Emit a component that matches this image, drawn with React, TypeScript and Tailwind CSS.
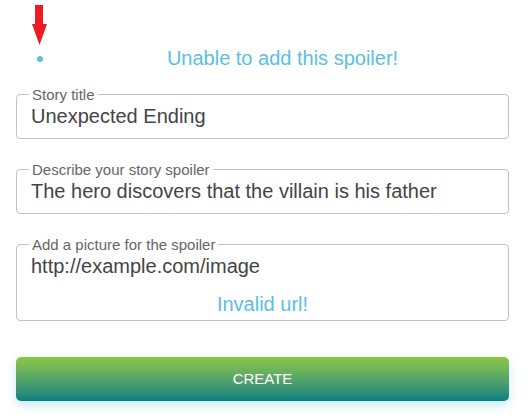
import React from "react";

function Field({
  label,
  value,
  error,
}: {
  label: string;
  value: string;
  error?: string;
}) {
  return (
    <fieldset className="w-[493px] rounded-[4px] border border-[#c2c2c2] pl-[12px] pr-[12px]">
      <legend className="px-[3px] text-[15px] leading-[17px] text-[#666666]">
        {label}
      </legend>
      <div className="h-[35px] pl-[2px] pt-[1px] text-[20px] leading-[24px] text-[#444444]">
        {value}
      </div>
      {error ? (
        <div className="mt-[4px] mb-[4px] text-center text-[20px] leading-[24px] text-[#5bc0de]">
          {error}
        </div>
      ) : null}
    </fieldset>
  );
}

export default function App() {
  return (
    <div
      className="relative h-[416px] w-[528px] overflow-hidden bg-white pl-[16px] pt-[47px]"
      style={{ fontFamily: '"Liberation Sans", Arial, sans-serif' }}
    >
      <svg
        className="absolute left-[32px] top-[5px]"
        width="15"
        height="40"
        viewBox="0 0 15 40"
      >
        <path d="M3 0 H11 V19 H15 L7.5 40 L0 19 H3 Z" fill="#ed1c24" />
      </svg>

      <ul className="w-[493px] list-disc pl-[40px] text-[20px] leading-[23px] text-[#5bc0de]">
        <li className="text-center">Unable to add this spoiler!</li>
      </ul>

      <div className="mt-[16px] flex flex-col gap-[22px]">
        <Field label="Story title" value="Unexpected Ending" />
        <Field
          label="Describe your story spoiler"
          value="The hero discovers that the villain is his father"
        />
        <Field
          label="Add a picture for the spoiler"
          value="http://example.com/image"
          error="Invalid url!"
        />
      </div>

      <button className="mt-[36px] flex h-[44px] w-[493px] items-center justify-center rounded-[5px] bg-gradient-to-b from-[#8dc83c] to-[#00807f] text-[15px] text-white shadow-[0_4px_10px_rgba(91,192,222,0.35)]">
        CREATE
      </button>
    </div>
  );
}
